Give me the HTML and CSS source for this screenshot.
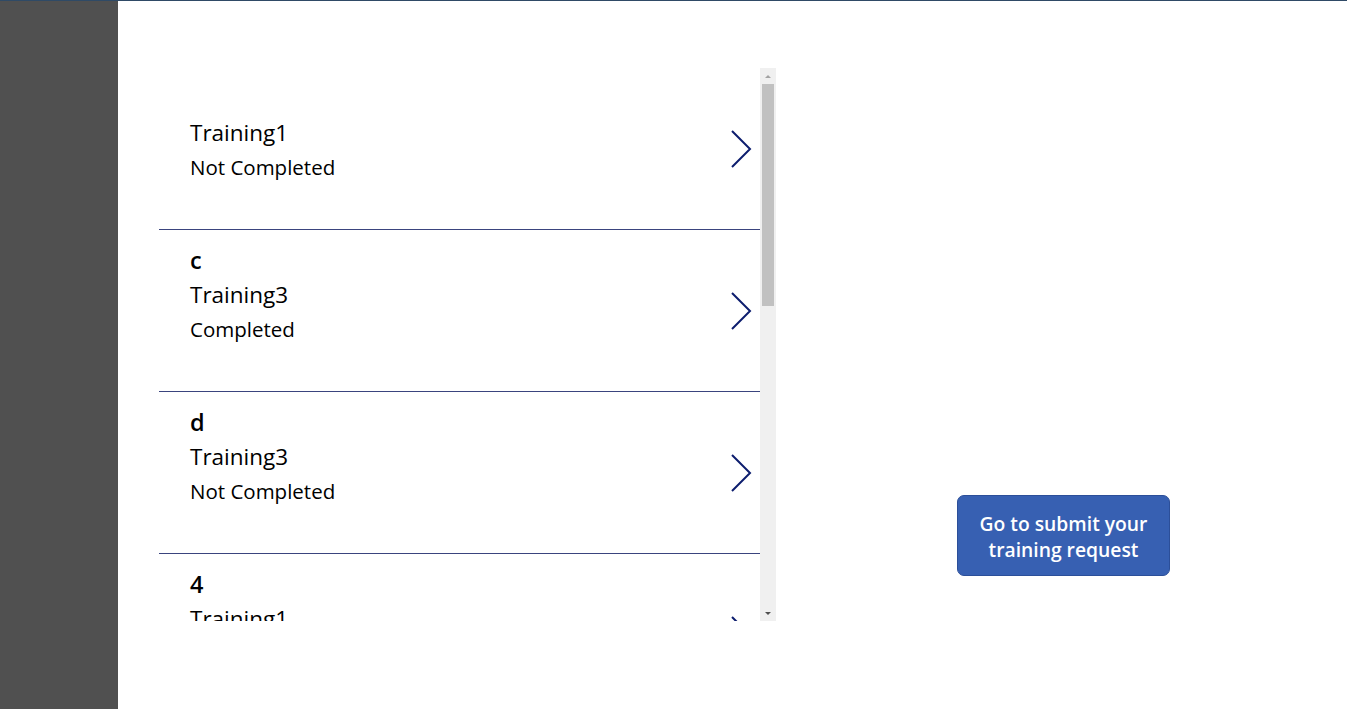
FILE: index.html
```html
<!DOCTYPE html>
<html lang="en">
<head>
<meta charset="utf-8">
<title>Trainings</title>
<link rel="stylesheet" href="styles.css">
</head>
<body>
<div class="app">
  <aside class="sidebar"></aside>
  <main class="main">
    <section class="gallery">
      <div class="list">
        <div class="row">
          <div class="text">
            <div class="title"></div>
            <div class="subtitle">Training1</div>
            <div class="body">Not Completed</div>
          </div>
          <svg class="chev" width="22" height="40" viewBox="0 0 22 40"><path d="M2 2 L20 20 L2 38" fill="none" stroke="#0c1d6e" stroke-width="2"/></svg>
        </div>
        <div class="row">
          <div class="text">
            <div class="title">c</div>
            <div class="subtitle">Training3</div>
            <div class="body">Completed</div>
          </div>
          <svg class="chev" width="22" height="40" viewBox="0 0 22 40"><path d="M2 2 L20 20 L2 38" fill="none" stroke="#0c1d6e" stroke-width="2"/></svg>
        </div>
        <div class="row">
          <div class="text">
            <div class="title">d</div>
            <div class="subtitle">Training3</div>
            <div class="body">Not Completed</div>
          </div>
          <svg class="chev" width="22" height="40" viewBox="0 0 22 40"><path d="M2 2 L20 20 L2 38" fill="none" stroke="#0c1d6e" stroke-width="2"/></svg>
        </div>
        <div class="row">
          <div class="text">
            <div class="title">4</div>
            <div class="subtitle">Training1</div>
            <div class="body">Completed</div>
          </div>
          <svg class="chev" width="22" height="40" viewBox="0 0 22 40"><path d="M2 2 L20 20 L2 38" fill="none" stroke="#0c1d6e" stroke-width="2"/></svg>
        </div>
      </div>
      <div class="scrollbar">
        <div class="arrow up"></div>
        <div class="track"><div class="thumb"></div></div>
        <div class="arrow down"></div>
      </div>
    </section>
    <button class="submit">Go to submit your<br>training request</button>
  </main>
</div>
</body>
</html>
```
FILE: styles.css
```css
html, body {
  margin: 0;
  padding: 0;
  height: 100%;
  overflow: hidden;
  background: #ffffff;
}
body {
  font-family: "Open Sans", "Noto Sans", sans-serif;
  border-top: 1px solid #2f4a66;
  box-sizing: border-box;
}
.app {
  display: flex;
  height: 708px;
}
.sidebar {
  width: 118px;
  flex: 0 0 118px;
  background: #505050;
}
.main {
  flex: 1;
  display: flex;
  align-items: flex-start;
}
.gallery {
  margin-left: 41px;
  margin-top: 67px;
  width: 617px;
  height: 553px;
  display: flex;
  overflow: hidden;
}
.list {
  width: 601px;
  height: 553px;
  overflow: hidden;
}
.row {
  height: 161px;
  border-bottom: 1px solid #3a447e;
  display: flex;
  align-items: center;
  padding-left: 31px;
  padding-right: 8px;
}
.text {
  flex: 1;
  align-self: flex-start;
  padding-top: 13px;
  color: #000000;
}
.title {
  height: 34px;
  line-height: 34px;
  font-size: 23.5px;
  font-weight: 600;
}
.subtitle {
  height: 35px;
  line-height: 35px;
  font-size: 22.5px;
}
.body {
  height: 34px;
  line-height: 34px;
  font-size: 20.5px;
}
.chev {
  display: block;
  flex: 0 0 22px;
}
.scrollbar {
  width: 16px;
  flex: 0 0 16px;
  height: 553px;
  background: #f0f0f0;
  display: flex;
  flex-direction: column;
}
.arrow {
  height: 16px;
  flex: 0 0 16px;
  display: flex;
  align-items: center;
  justify-content: center;
}
.arrow::before {
  content: "";
  width: 0;
  height: 0;
  border-left: 3px solid transparent;
  border-right: 3px solid transparent;
}
.arrow.up::before {
  border-bottom: 3px solid #a3a3a3;
}
.arrow.down::before {
  border-top: 3px solid #505050;
}
.track {
  flex: 1;
  padding: 0 2px;
}
.thumb {
  height: 222px;
  background: #c1c1c1;
}
.submit {
  margin-left: 181px;
  margin-top: 494px;
  width: 213px;
  height: 81px;
  background: #3760b2;
  border: 1px solid #2c4f99;
  border-radius: 7px;
  color: #ffffff;
  font-family: "Open Sans", "Noto Sans", sans-serif;
  font-size: 19.3px;
  font-weight: 600;
  line-height: 26px;
  padding: 2px 0 0 0;
}
```
